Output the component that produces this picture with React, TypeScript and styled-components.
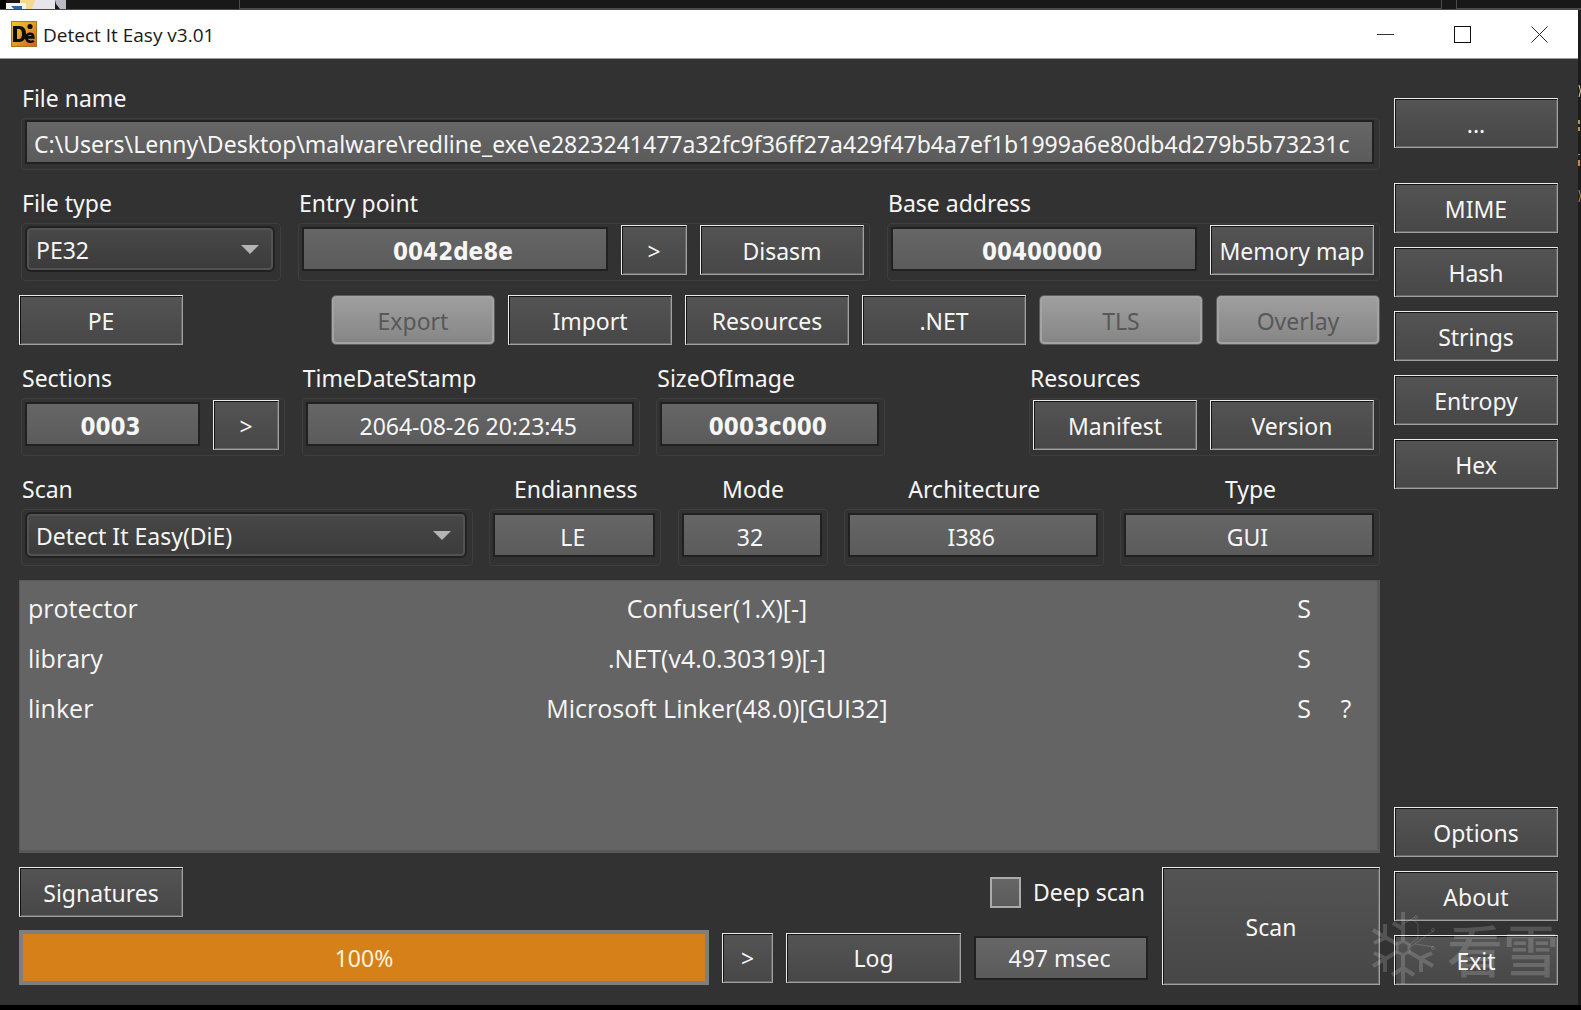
import React from "react";
import styled, { createGlobalStyle, css } from "styled-components";

const uiFont = '"Noto Sans", "DejaVu Sans Condensed", "Noto Sans CJK SC", sans-serif';
const boldFont = '"DejaVu Sans Condensed", "Noto Sans", sans-serif';
const segoeFont = '"Open Sans", "Noto Sans", sans-serif';

const GlobalStyle = createGlobalStyle`
  *, *::before, *::after { box-sizing: border-box; }
  body { margin: 0; background: #000; }
  button, input, select { font: inherit; color: inherit; margin: 0; }
`;

const Desktop = styled.div`
  position: relative;
  display: flex;
  flex-direction: column;
  min-height: 100vh;
  padding-bottom: 5px;
  background: #000;
  color: #f6f6f6;
  font-family: ${uiFont};
  font-size: 23px;
  line-height: 28px;
`;

const TopStrip = styled.div`
  display: flex;
  gap: 14px;
  height: 10px;
  background: #181818;
  border-bottom: 1px solid #4a4a4a;
`;

const ShortcutCorner = styled.div`
  width: 225px;
  svg { display: block; }
`;

const PaneEdge = styled.div<{ $grow?: boolean }>`
  flex: ${(p) => (p.$grow ? "1 1 auto" : "0 0 125px")};
  height: 9px;
  border: solid #4b4b4b;
  border-width: 0 ${(p) => (p.$grow ? "1px" : "0")} 1px 1px;
`;

const WindowRow = styled.div`
  display: flex;
  flex: 1;
`;

const Window = styled.main`
  flex: 1;
  min-width: 0;
  display: flex;
  flex-direction: column;
  background: #323232;
`;

const RightEdge = styled.div`
  flex: 0 0 3px;
  background: #1c1c1c;
  svg { display: block; }
`;

const TitleBar = styled.header`
  display: flex;
  align-items: center;
  height: 49px;
  padding-left: 11px;
  background: #fff;
  border-bottom: 1px solid #9a9a9a;
  color: #1a1a1a;
  font-family: ${segoeFont};
  font-size: 19px;
`;

const Title = styled.h1`
  flex: 1;
  margin: 0 0 0 6px;
  padding-top: 2px;
  font: inherit;
`;

const CaptionButton = styled.button`
  width: 77px;
  height: 48px;
  padding: 0;
  border: 0;
  background: none;
  display: grid;
  place-items: center;
`;

const Body = styled.div`
  flex: 1;
  display: flex;
  gap: 14px;
  padding: 20px 20px 20px 19px;
`;

const Main = styled.div`
  flex: 1;
  min-width: 0;
  display: flex;
  flex-direction: column;
  gap: 14px;
`;

const Side = styled.nav`
  flex: 0 0 164px;
  display: flex;
  flex-direction: column;
  gap: 14px;
  padding-top: 19px;
`;

const SideGap = styled.div<{ $grow?: boolean }>`
  flex: ${(p) => (p.$grow ? "1" : "0 0 7px")};
`;

const PushButton = styled.button<{ $w?: number; $h?: number }>`
  flex: none;
  width: ${(p) => (p.$w ? `${p.$w}px` : "164px")};
  height: ${(p) => p.$h ?? 50}px;
  padding: 1px 0 0;
  border: 1px solid;
  border-color: #ececec #a0a0a0 #a0a0a0 #ececec;
  border-radius: 0;
  background: linear-gradient(#545454, #474747);
  box-shadow: inset 1px 1px 0 #141414, inset -1px -1px 0 #6a6a6a;
  text-align: center;
  white-space: nowrap;

  &:disabled {
    border-color: #5e5e5e;
    border-radius: 5px;
    background: linear-gradient(#9f9f9f, #858585);
    box-shadow: inset 0 0 0 2px #a3a3a3;
    color: #585858;
  }
`;

const Row = styled.div`
  display: flex;
  justify-content: space-between;
  padding-left: 2px;
`;

const ButtonRow = styled.div`
  display: flex;
  justify-content: space-between;
`;

const Buttons = styled.div`
  display: flex;
  gap: 13px;
`;

const Group = styled.section<{ $w?: number; $ml?: number; $center?: boolean }>`
  flex: ${(p) => (p.$w ? `0 1 ${p.$w}px` : "1 1 0")};
  min-width: 0;
  margin-left: ${(p) => p.$ml ?? 0}px;
  padding-top: 5px;
  text-align: ${(p) => (p.$center ? "center" : "left")};
`;

const GroupLabel = styled.label`
  display: block;
  height: 34px;
  padding-left: 1px;
`;

const Frame = styled.div<{ $size?: "short" | "medium" }>`
  display: flex;
  gap: 13px;
  height: ${(p) => (p.$size === "short" ? 52 : p.$size === "medium" ? 57 : 58)}px;
  padding: 1px 5px 0 3px;
  border: 1px solid #3e3e3e;
  border-radius: 4px;
`;

const well = css`
  border: 2px solid #212121;
  background: linear-gradient(#666, #5b5b5b);
  outline: 0;
  border-radius: 0;
`;

const Field = styled.input<{ $bold?: boolean; $left?: boolean; $top?: number }>`
  ${well}
  flex: 1;
  min-width: 0;
  height: 44px;
  margin-top: ${(p) => p.$top ?? 2}px;
  padding: ${(p) => (p.$left ? "3px 6px 0 7px" : p.$bold ? "5px 4px 0 0" : "3px 3px 0 0")};
  font-family: ${(p) => (p.$bold ? boldFont : uiFont)};
  font-weight: ${(p) => (p.$bold ? 700 : 400)};
  font-size: ${(p) => (p.$bold ? 24 : 23)}px;
  text-align: ${(p) => (p.$left ? "left" : "center")};
`;

const SelectBox = styled.div`
  flex: 1;
  display: grid;
  height: 46px;
  margin-top: 1px;
  align-items: center;
  svg { grid-area: 1 / 1; justify-self: end; margin-right: 16px; pointer-events: none; }
`;

const Select = styled.select`
  grid-area: 1 / 1;
  width: 100%;
  height: 46px;
  padding: 2px 40px 0 9px;
  line-height: 36px;
  appearance: none;
  border: 2px solid #212121;
  border-radius: 6px;
  background: linear-gradient(#484848, #3b3b3b);
  box-shadow: inset 0 0 0 2px #525252;
  outline: 0;
`;

const Results = styled.div`
  flex: 1;
  border: 1px solid #585858;
  border-width: 1px 3px 3px 1px;
  background: #646464;
`;

const ResultTable = styled.table`
  width: 100%;
  border-collapse: collapse;
  table-layout: fixed;
  font-family: ${segoeFont};
  font-size: 25px;
  line-height: 30px;
  margin-top: 2px;
  td { height: 50px; padding: 0; text-align: center; }
  td:first-child { text-align: left; padding-left: 8px; }
`;

const Col = styled.col<{ $w?: number }>`
  width: ${(p) => (p.$w ? `${p.$w}px` : "auto")};
`;

const Bottom = styled.div`
  display: flex;
  gap: 14px;
`;

const BottomLeft = styled.div`
  flex: 1;
  display: flex;
  flex-direction: column;
  gap: 13px;
`;

const BottomRow = styled.div`
  display: flex;
  align-items: center;
  justify-content: space-between;
  gap: 13px;
`;

const CheckLabel = styled.label`
  display: flex;
  align-items: center;
  gap: 12px;
  padding-right: 3px;
`;

const CheckBox = styled.input`
  appearance: none;
  width: 31px;
  height: 31px;
  border: 2px solid #ababab;
  background: linear-gradient(#666, #5b5b5b);
`;

const Progress = styled.div`
  flex: 1;
  height: 55px;
  border: 4px solid #7f7f7f;
  background: #555;
`;

const ProgressFill = styled.div`
  display: grid;
  place-items: center;
  height: 47px;
  background: #d6801a;
  color: #fff3dc;
`;

const Elapsed = styled.output`
  ${well}
  width: 174px;
  height: 44px;
  padding: 6px 3px 0 0;
  text-align: center;
`;

const Watermark = styled.div`
  position: absolute;
  right: 22px;
  bottom: 26px;
  display: flex;
  align-items: center;
  gap: 12px;
  color: rgba(255, 255, 255, 0.17);
  font: 500 56px/68px "Noto Sans CJK SC", sans-serif;
  pointer-events: none;
  svg { display: block; }
`;

const Arrow = () => (
  <svg width="18" height="9" viewBox="0 0 18 9" aria-hidden="true">
    <path d="M0 0H18L9 9Z" fill="#b4b4b4" />
  </svg>
);

const DieLogo = () => (
  <svg width="26" height="26" viewBox="0 0 26 26" aria-hidden="true">
    <defs>
      <linearGradient id="die" x1="0" y1="0" x2="1" y2="1">
        <stop offset="0" stopColor="#f0c62c" />
        <stop offset="0.5" stopColor="#e59a2a" />
        <stop offset="1" stopColor="#cf5c22" />
      </linearGradient>
    </defs>
    <rect x="0.5" y="0.5" width="25" height="25" fill="url(#die)" stroke="#a8741c" />
    <path
      d="M2 5H8C13 5 15 8 15 13C15 18 12 21 8 21H2ZM6 8V18H8C10 18 11 16 11 13C11 10 10 8 8 8Z"
      fill="#0b0b08"
      fillRule="evenodd"
    />
    <circle cx="19" cy="5.5" r="2.6" fill="#0b0b08" />
    <path d="M22.5 19.6C21.5 21.3 16 21.6 15.2 17C14.7 12.5 22.5 10.5 22.3 16.4H16" fill="none" stroke="#0b0b08" strokeWidth="2.6" />
  </svg>
);

const Snowflake = () => (
  <svg width="64" height="72" viewBox="0 0 64 72" fill="none" stroke="currentColor" aria-hidden="true">
    <path d="M32 29L38 32.500V39.500L32 43L26 39.500V32.500Z" strokeWidth="3" />
    <g strokeWidth="4">
      <path d="M32 28V0M32 17L22 11" />
      <path d="M26 32L2 18M14 26V12M14 26L3 31" />
      <path d="M26 40L2 54M14 46L3 41M14 46V60" />
      <path d="M32 44V72M32 56L21 63M32 56L43 63" />
      <path d="M38 40L62 54M50 46V60M50 46L61 41" />
    </g>
    <g strokeWidth="1">
      <path d="M32 12L44 5M38 33L47 26V12L42 8M39 35L62 19M44 32L62 35" />
      <circle cx="45" cy="5" r="1.500" />
      <circle cx="62" cy="18" r="1.500" />
      <circle cx="62" cy="36" r="1.500" />
    </g>
  </svg>
);

const results = [
  { kind: "protector", name: "Confuser(1.X)[-]", s: "S", q: "" },
  { kind: "library", name: ".NET(v4.0.30319)[-]", s: "S", q: "" },
  { kind: "linker", name: "Microsoft Linker(48.0)[GUI32]", s: "S", q: "?" },
];

export default function App() {
  const progress = 100;
  return (
    <Desktop>
      <GlobalStyle />
      <TopStrip>
        <ShortcutCorner>
          <svg width="66" height="9" viewBox="0 0 66 9" aria-hidden="true">
            <rect width="6" height="9" fill="#000" />
            <path d="M20 0H36L33 9H26V3H20Z" fill="#f4d98a" />
            <path d="M35 0H55V9H32Z" fill="#e6e6ea" />
            <path d="M55 0H66V9H60L56 4Z" fill="#b9bac4" />
            <path d="M6 3H26V9H6Z" fill="#f3f3f3" />
            <path d="M11 6H22V9H14Z" fill="#2f64a5" />
          </svg>
        </ShortcutCorner>
        <PaneEdge $grow />
        <PaneEdge />
      </TopStrip>
      <WindowRow>
        <Window>
          <TitleBar>
            <DieLogo />
            <Title>Detect It Easy v3.01</Title>
            <CaptionButton aria-label="Minimize">
              <svg width="17" height="17" stroke="#333" aria-hidden="true"><path d="M0 8.500H17" /></svg>
            </CaptionButton>
            <CaptionButton aria-label="Maximize">
              <svg width="17" height="17" fill="none" stroke="#111" aria-hidden="true"><rect x="0.500" y="0.500" width="16" height="16" /></svg>
            </CaptionButton>
            <CaptionButton aria-label="Close">
              <svg width="17" height="17" stroke="#222" aria-hidden="true"><path d="M0.500 0.500L16.500 16.500M16.500 0.500L0.500 16.500" /></svg>
            </CaptionButton>
          </TitleBar>
          <Body>
            <Main>
              <Row>
                <Group>
                  <GroupLabel htmlFor="file">File name</GroupLabel>
                  <Frame $size="short">
                    <Field
                      id="file"
                      readOnly
                      $left
                      $top={0}
                      value="C:\Users\Lenny\Desktop\malware\redline_exe\e2823241477a32fc9f36ff27a429f47b4a7ef1b1999a6e80db4d279b5b73231c"
                    />
                  </Frame>
                </Group>
              </Row>
              <Row>
                <Group $w={260}>
                  <GroupLabel htmlFor="ftype">File type</GroupLabel>
                  <Frame>
                    <SelectBox>
                      <Select id="ftype"><option>PE32</option></Select>
                      <Arrow />
                    </SelectBox>
                  </Frame>
                </Group>
                <Group $w={572}>
                  <GroupLabel htmlFor="entry">Entry point</GroupLabel>
                  <Frame>
                    <Field id="entry" readOnly $bold value="0042de8e" />
                    <PushButton $w={66}>&gt;</PushButton>
                    <PushButton>Disasm</PushButton>
                  </Frame>
                </Group>
                <Group $w={493}>
                  <GroupLabel htmlFor="base">Base address</GroupLabel>
                  <Frame>
                    <Field id="base" readOnly $bold value="00400000" />
                    <PushButton>Memory map</PushButton>
                  </Frame>
                </Group>
              </Row>
              <ButtonRow>
                <PushButton>PE</PushButton>
                <Buttons>
                  <PushButton disabled>Export</PushButton>
                  <PushButton>Import</PushButton>
                  <PushButton>Resources</PushButton>
                  <PushButton>.NET</PushButton>
                  <PushButton disabled>TLS</PushButton>
                  <PushButton disabled>Overlay</PushButton>
                </Buttons>
              </ButtonRow>
              <Row>
                <Group $w={264}>
                  <GroupLabel htmlFor="sections">Sections</GroupLabel>
                  <Frame>
                    <Field id="sections" readOnly $bold value="0003" />
                    <PushButton $w={66}>&gt;</PushButton>
                  </Frame>
                </Group>
                <Group $w={338}>
                  <GroupLabel htmlFor="stamp">TimeDateStamp</GroupLabel>
                  <Frame>
                    <Field id="stamp" readOnly value="2064-08-26 20:23:45" />
                  </Frame>
                </Group>
                <Group $w={229}>
                  <GroupLabel htmlFor="size">SizeOfImage</GroupLabel>
                  <Frame>
                    <Field id="size" readOnly $bold value="0003c000" />
                  </Frame>
                </Group>
                <Group $w={351} $ml={127}>
                  <GroupLabel as="div">Resources</GroupLabel>
                  <Frame>
                    <PushButton>Manifest</PushButton>
                    <PushButton>Version</PushButton>
                  </Frame>
                </Group>
              </Row>
              <Row>
                <Group $w={452}>
                  <GroupLabel htmlFor="scan">Scan</GroupLabel>
                  <Frame $size="medium">
                    <SelectBox>
                      <Select id="scan"><option>Detect It Easy(DiE)</option></Select>
                      <Arrow />
                    </SelectBox>
                  </Frame>
                </Group>
                <Group $w={172} $center>
                  <GroupLabel htmlFor="endian">Endianness</GroupLabel>
                  <Frame $size="medium"><Field id="endian" readOnly value="LE" /></Frame>
                </Group>
                <Group $w={150} $center>
                  <GroupLabel htmlFor="mode">Mode</GroupLabel>
                  <Frame $size="medium"><Field id="mode" readOnly value="32" /></Frame>
                </Group>
                <Group $w={260} $center>
                  <GroupLabel htmlFor="arch">Architecture</GroupLabel>
                  <Frame $size="medium"><Field id="arch" readOnly value="I386" /></Frame>
                </Group>
                <Group $w={260} $center>
                  <GroupLabel htmlFor="type">Type</GroupLabel>
                  <Frame $size="medium"><Field id="type" readOnly value="GUI" /></Frame>
                </Group>
              </Row>
              <Results>
                <ResultTable>
                  <colgroup>
                    <Col $w={131} />
                    <Col />
                    <Col $w={42} />
                    <Col $w={42} />
                    <Col $w={10} />
                  </colgroup>
                  <tbody>
                    {results.map((r) => (
                      <tr key={r.kind}>
                        <td>{r.kind}</td>
                        <td>{r.name}</td>
                        <td>{r.s}</td>
                        <td>{r.q}</td>
                        <td />
                      </tr>
                    ))}
                  </tbody>
                </ResultTable>
              </Results>
              <Bottom>
                <BottomLeft>
                  <BottomRow>
                    <PushButton>Signatures</PushButton>
                    <CheckLabel>
                      <CheckBox type="checkbox" />
                      Deep scan
                    </CheckLabel>
                  </BottomRow>
                  <BottomRow>
                    <Progress role="progressbar" aria-valuenow={progress} aria-label="Scan progress">
                      <ProgressFill style={{ width: `${progress}%` }}>{progress}%</ProgressFill>
                    </Progress>
                    <PushButton $w={51}>&gt;</PushButton>
                    <PushButton $w={175}>Log</PushButton>
                    <Elapsed>497 msec</Elapsed>
                  </BottomRow>
                </BottomLeft>
                <PushButton $w={218} $h={118}>Scan</PushButton>
              </Bottom>
            </Main>
            <Side>
              <PushButton>...</PushButton>
              <SideGap />
              <PushButton>MIME</PushButton>
              <PushButton>Hash</PushButton>
              <PushButton>Strings</PushButton>
              <PushButton>Entropy</PushButton>
              <PushButton>Hex</PushButton>
              <SideGap $grow />
              <PushButton>Options</PushButton>
              <PushButton>About</PushButton>
              <PushButton>Exit</PushButton>
            </Side>
          </Body>
        </Window>
        <RightEdge>
          <svg width="3" height="200" aria-hidden="true">
            <path d="M1 75Q4 81 1 87" stroke="#e8cfa0" fill="none" />
            <path d="M1 110V114M1 117V121M1 144V145M1 150V156" stroke="#b98d5a" strokeWidth="2" />
            <path d="M1 180Q4 186 1 192" stroke="#b98d5a" fill="none" />
          </svg>
        </RightEdge>
      </WindowRow>
      <Watermark aria-hidden="true">
        <Snowflake />
        <span>看雪</span>
      </Watermark>
    </Desktop>
  );
}
